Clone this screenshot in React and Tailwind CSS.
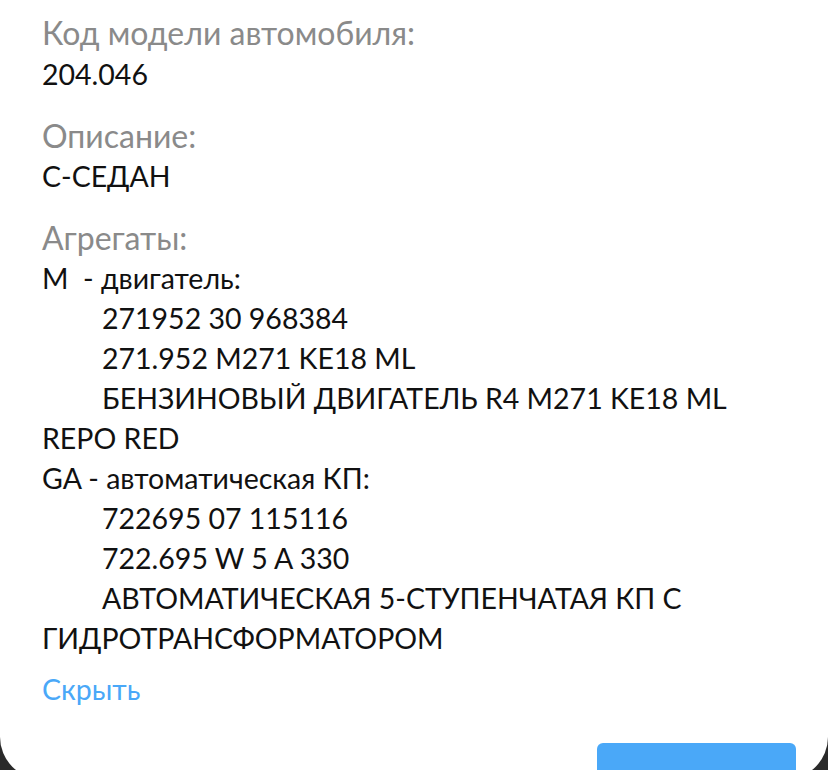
export default function App() {
  const engine = [
    '271952 30 968384',
    '271.952 M271 KE18 ML',
  ];
  const gearbox = [
    '722695 07 115116',
    '722.695 W 5 A 330',
  ];

  return (
    <div className="h-[770px] overflow-hidden bg-[#2a2a2a]" style={{ fontFamily: 'Lato, "Noto Sans", sans-serif' }}>
      <div className="relative h-[779px] bg-white rounded-b-[42px] px-[42px] pt-[13px] text-[#111]">
        <div className="text-[32px] leading-[40px] text-[#8a8a8a]">Код модели автомобиля:</div>
        <div className="text-[28.5px] leading-[40px] mt-[1px]">204.046</div>

        <div className="mt-[22px] text-[32px] leading-[40px] text-[#8a8a8a]">Описание:</div>
        <div className="text-[28.5px] leading-[40px]">С-СЕДАН</div>

        <div className="mt-[22px] text-[32px] leading-[40px] text-[#8a8a8a]">Агрегаты:</div>
        <div className="text-[28.5px] leading-[40px]">
          <div className="whitespace-pre">M  - двигатель:</div>
          {engine.map((l) => (
            <div key={l} className="pl-[60px]">{l}</div>
          ))}
          <div>
            <span className="pl-[60px]">БЕНЗИНОВЫЙ ДВИГАТЕЛЬ R4 M271 KE18 ML</span>
            <br />
            REPO RED
          </div>
          <div>GA - автоматическая КП:</div>
          {gearbox.map((l) => (
            <div key={l} className="pl-[60px]">{l}</div>
          ))}
          <div>
            <span className="pl-[60px]">АВТОМАТИЧЕСКАЯ 5-СТУПЕНЧАТАЯ КП С</span>
            <br />
            ГИДРОТРАНСФОРМАТОРОМ
          </div>
        </div>

        <div className="mt-[11px] text-[28.5px] leading-[40px] text-[#4aa8f8]">Скрыть</div>

        <div className="flex justify-end mt-[34px]">
          <button className="w-[199px] h-[50px] -mr-[10px] rounded-[6px] bg-[#4aa8f8]"></button>
        </div>
      </div>
    </div>
  );
}
